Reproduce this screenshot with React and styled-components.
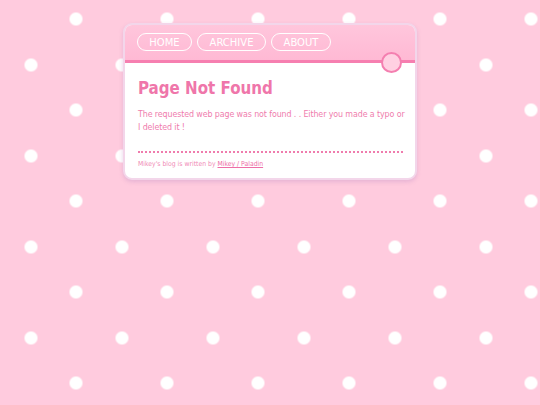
import React from 'react';
import styled, { createGlobalStyle } from 'styled-components';

const Global = createGlobalStyle`
  html, body {
    margin: 0;
    padding: 0;
  }
  body {
    min-height: 405px;
    background-color: #ffcbde;
    background-image:
      radial-gradient(circle at 45.5px 45.5px, #ffffff 6px, rgba(255,255,255,0) 7px),
      radial-gradient(circle at 45.5px 45.5px, #ffffff 6px, rgba(255,255,255,0) 7px);
    background-size: 91px 91px;
    background-position: 30.5px -26.5px, -14.5px 19.5px;
    font-family: "DejaVu Sans Condensed", "DejaVu Sans", Verdana, sans-serif;
  }
`;

const Page = styled.div`
  display: flex;
  justify-content: center;
  padding-top: 23px;
`;

const Card = styled.div`
  width: 294px;
  box-sizing: border-box;
  background: #ffffff;
  border: 2px solid #f3d6ea;
  border-radius: 9px;
  box-shadow: 0 2px 4px rgba(200, 150, 200, 0.45);
`;

const Header = styled.div`
  position: relative;
  display: flex;
  gap: 5px;
  padding: 8px 12px 9px;
  background: linear-gradient(#ffc6dc, #ffb9d4);
  border-bottom: 3px solid #f67fb0;
  border-radius: 7px 7px 0 0;
`;

const NavButton = styled.a`
  display: inline-flex;
  align-items: center;
  justify-content: center;
  box-sizing: border-box;
  height: 18px;
  width: ${p => p.$w}px;
  border: 1.5px solid #ffffff;
  border-radius: 10px;
  color: #ffffff;
  font-family: "DejaVu Sans", Verdana, sans-serif;
  font-size: 10px;
  text-decoration: none;
`;

const Knob = styled.div`
  position: absolute;
  right: 13px;
  bottom: -13px;
  width: 17px;
  height: 17px;
  border-radius: 50%;
  background: #ffd0e2;
  border: 2px solid #f47fb0;
`;

const Body = styled.div`
  padding: 15px 10px 10px 13px;
  color: #ef7cad;
`;

const Title = styled.h1`
  margin: 0 0 10px;
  font-size: 16.8px;
  font-weight: bold;
  color: #ef76aa;
`;

const Text = styled.p`
  margin: 0;
  font-size: 8.8px;
  letter-spacing: -0.1px;
  line-height: 13px;
`;

const Rule = styled.div`
  margin-top: 17px;
  margin-right: 2px;
  border-top: 2px dotted #ef7cad;
`;

const Footer = styled.p`
  margin: 7px 0 0;
  font-size: 6.8px;
  color: #f08ab5;
  a {
    color: #ee6ea6;
  }
`;

export default function App() {
  return (
    <>
      <Global />
      <Page>
        <Card>
          <Header>
            <NavButton $w={55}>HOME</NavButton>
            <NavButton $w={69}>ARCHIVE</NavButton>
            <NavButton $w={60}>ABOUT</NavButton>
            <Knob />
          </Header>
          <Body>
            <Title>Page Not Found</Title>
            <Text>
              The requested web page was not found . . Either you made a typo or I deleted it !
            </Text>
            <Rule />
            <Footer>
              Mikey's blog is written by <a href="#">Mikey / Paladin</a>
            </Footer>
          </Body>
        </Card>
      </Page>
    </>
  );
}
